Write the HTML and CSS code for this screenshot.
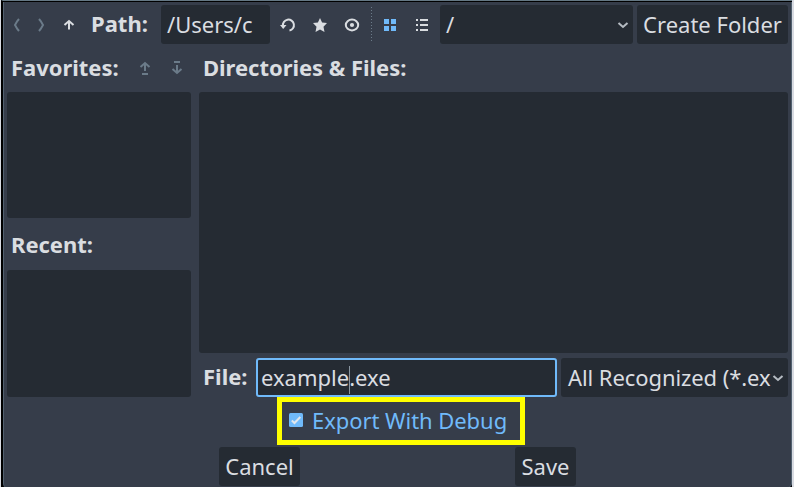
FILE: index.html
```html
<!DOCTYPE html>
<html lang="en">
<head>
<meta charset="utf-8">
<title>Export Project</title>
<link rel="stylesheet" href="styles.css">
</head>
<body>
<main class="dialog">
  <header class="toolbar">
    <svg class="icon dim" viewBox="0 0 16 16"><path d="M10 2 8.300 4 6 8l2.300 4 1.700 2"/></svg>
    <svg class="icon dim next" viewBox="0 0 16 16"><path d="M6 2 7.700 4 10 8l-2.300 4-1.700 2"/></svg>
    <svg class="icon up" viewBox="0 0 16 16"><path d="M8 12.500V4.500M3.500 8 8 4l4.500 4"/></svg>
    <b class="path-label">Path:</b>
    <div class="field path">/Users/c</div>
    <svg class="icon refresh" viewBox="0 0 16 16"><path d="M3 9a5.500 5.500 0 1 1 6.500 4.500"/><path class="solid" d="M0 8h6.500L3.200 12z"/></svg>
    <svg class="icon star" viewBox="0 0 16 16"><path class="solid" d="M8 1l2.100 4.600 4.900.5-3.500 3.700 1 5.200L8 12.400l-4.500 2.600 1-5.200L1 6.100l4.900-.5z"/></svg>
    <svg class="icon eye" viewBox="0 0 16 16"><ellipse cx="8" cy="8" rx="6.200" ry="5.400"/><circle class="solid" cx="8" cy="8" r="2.100"/></svg>
    <i class="separator"></i>
    <svg class="icon grid" viewBox="0 0 16 16"><path class="solid" d="M2 2h5v5H2zM9 2h5v5H9zM2 9h5v5H2zM9 9h5v5H9z"/></svg>
    <svg class="icon list" viewBox="0 0 16 16"><path d="M2 3h2M6 3h8M2 8h2M6 8h8M2 13h2M6 13h8"/></svg>
    <div class="field drive"><span>/</span><svg class="chevron" viewBox="0 0 12 8"><path d="M1.500 2 6 6l4.500-4"/></svg></div>
    <button class="field create">Create Folder</button>
  </header>
  <div class="content">
    <aside class="sidebar">
      <div class="heading"><b>Favorites:</b>
        <svg class="icon dim raise" viewBox="0 0 16 16"><path d="M8 11V3M3.500 7 8 3l4.500 4M5 14h6"/></svg>
        <svg class="icon dim lower" viewBox="0 0 16 16"><path d="M8 5v8M3.500 9 8 13l4.500-4M5 2h6"/></svg>
      </div>
      <div class="panel favorites"></div>
      <div class="heading recent-heading"><b>Recent:</b></div>
      <div class="panel recent"></div>
    </aside>
    <section class="files">
      <div class="heading"><b>Directories &amp; Files:</b></div>
      <div class="panel listing"></div>
      <div class="file-row">
        <b>File:</b>
        <div class="field filename">example<i class="caret"></i>.exe</div>
        <div class="field filter"><span>All Recognized (*.ex</span><svg class="chevron" viewBox="0 0 12 8"><path d="M1.500 2 6 6l4.500-4"/></svg></div>
      </div>
    </section>
  </div>
  <div class="option"><svg class="check" viewBox="0 0 14 14"><rect width="14" height="14" rx="1.500"/><path d="M2.800 7.500 5.500 10 11.300 4"/></svg><span>Export With Debug</span></div>
  <footer class="actions"><button class="field cancel">Cancel</button><button class="field save">Save</button></footer>
</main>
</body>
</html>
```

FILE: styles.css
```css
* { box-sizing: border-box; }
body { margin: 0; width: 794px; height: 487px; overflow: hidden; background: #000; border: solid #d8dbe2; border-width: 0 2px 0 1px; font: 22px/36px "Noto Sans", sans-serif; color: #dadde1; }
.dialog { height: 487px; padding: 4px 0 0 3px; background: #363d4a; border: solid #000; border-width: 1px 0 0 2px; border-top-color: #647783; border-bottom-left-radius: 4px; border-bottom-right-radius: 4px; box-shadow: inset 0 1px #000, inset 1px 0 #526170, inset -1px 0 #526170; }
b { font-weight: 700; line-height: 36px; padding-bottom: 2px; }
svg { display: block; flex: none; overflow: visible; fill: none; stroke: currentColor; stroke-width: 2; }
.solid { fill: currentColor; stroke: none; }
.icon { width: 16px; height: 16px; }
.dim { color: #6b7b89; }
.field { height: 39px; margin: 0; border: 0; border-radius: 3px; background: #252b33; color: #dadde1; font: inherit; white-space: pre; }
.toolbar { display: flex; align-items: center; height: 39px; padding-left: 3px; }
.next { margin-left: 8px; }
.up { margin-left: 12px; }
.path-label { margin-left: 14px; width: 70px; padding-bottom: 4px; }
.path { width: 109px; padding-left: 6px; line-height: 38px; }
.refresh { margin-left: 10px; }
.star, .eye { margin-left: 16px; }
.separator { width: 1px; height: 35px; margin: 0 10px 0 11px; background: repeating-linear-gradient(#6b7b89 0 1px, transparent 1px 3px); }
.grid { color: #70bafa; }
.list { margin-left: 16px; }
.drive { display: flex; align-items: center; justify-content: space-between; width: 193px; margin-left: 10px; padding: 0 4px 0 6px; }
.drive span, .filter span { padding-bottom: 1px; }
.chevron { width: 12px; height: 8px; color: #b5bbc2; }
.create { width: 151px; margin-left: 4px; padding: 0 0 1px; text-align: center; }
.content { display: flex; gap: 8px; padding-left: 1px; }
.sidebar { width: 184px; }
.files { width: 589px; }
.heading { display: flex; align-items: center; height: 48px; padding-left: 4px; }
.heading b { padding-bottom: 3px; letter-spacing: -0.03px; }
.raise { margin-left: 18px; }
.lower { margin-left: 16px; }
.panel { border-radius: 3px; background: #252b33; }
.favorites { height: 126px; }
.recent-heading { height: 52px; padding-top: 2px; }
.recent { height: 127px; }
.listing { height: 261px; }
.file-row { display: flex; align-items: center; height: 39px; margin-top: 5px; }
.file-row b { width: 57px; padding: 0 0 4px 4px; }
.filename { width: 301px; padding-left: 3px; border: 2px solid #70bafa; line-height: 34px; }
.caret { display: inline-block; width: 1px; height: 28px; margin-right: -1px; background: #8995a0; vertical-align: middle; }
.filter { display: flex; align-items: center; justify-content: space-between; width: 227px; margin-left: 4px; padding: 0 4px 0 7px; }
.filter span { letter-spacing: -0.08px; }
.option { display: flex; align-items: center; width: 248px; height: 48px; margin-left: 271px; padding-left: 7px; border: 5px solid #ffff00; color: #70bafa; }
.option span { padding-bottom: 2px; letter-spacing: -0.05px; }
.check { width: 14px; height: 14px; margin: 0 9px 2px 0; }
.check rect { fill: #70bafa; stroke: none; }
.check path { stroke: #e2e7ec; }
.actions { display: flex; height: 39px; margin-top: 2px; padding-left: 213px; }
.cancel { width: 81px; padding: 0 0 1px; }
.save { width: 61px; margin-left: 215px; padding: 0 0 1px; }
```
